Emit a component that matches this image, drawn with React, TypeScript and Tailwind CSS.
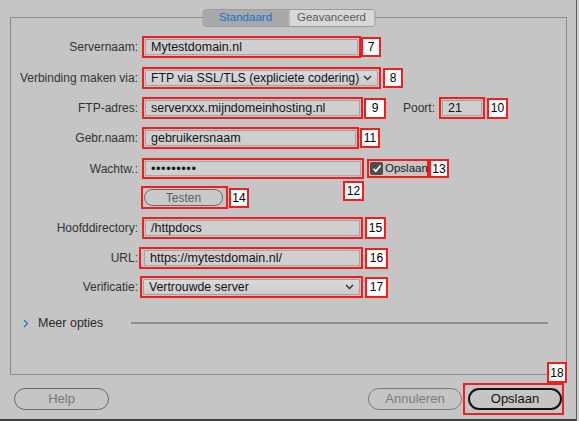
import React from 'react'

function Badge({ n, className = '' }: { n: string; className?: string }) {
  return (
    <div
      className={`flex items-center justify-center border-2 border-[#f21d1d] bg-white text-[12px] leading-none text-black ${className}`}
    >
      {n}
    </div>
  )
}

function Label({ text, className = '' }: { text: string; className?: string }) {
  return <div className={`w-[127px] shrink-0 text-right text-[12px] text-[#333] ${className}`}>{text}</div>
}

function Field({ value, width, className = '' }: { value: string; width: string; className?: string }) {
  return (
    <div className={`h-[22px] shrink-0 border-2 border-[#f21d1d] p-[1px] ${width} ${className}`}>
      <div className="flex h-full items-center whitespace-nowrap border border-[#a7a7a7] border-t-[#9d9d9d] bg-[#cfcfcf] pl-[5px] text-[12.5px] text-[#141414]">
        {value}
      </div>
    </div>
  )
}

function Chevron() {
  return (
    <svg width="9" height="6" viewBox="0 0 9 6" className="shrink-0">
      <path d="M1 1 L4.5 4.5 L8 1" fill="none" stroke="#2b2b2b" strokeWidth="1.3" />
    </svg>
  )
}

function Select({ value, width }: { value: string; width: string }) {
  return (
    <div className={`h-[22px] shrink-0 border-2 border-[#f21d1d] p-[1px] ${width}`}>
      <div className="flex h-full items-center justify-between whitespace-nowrap rounded-[2px] border border-[#a3a3a3] bg-gradient-to-b from-[#d9d9d9] to-[#cdcdcd] pl-[5px] pr-[5px] text-[12.3px] text-[#141414]">
        <span>{value}</span>
        <Chevron />
      </div>
    </div>
  )
}

export default function App() {
  return (
    <div className="flex h-[421px] w-[579px] overflow-hidden bg-[#c5c5c5] font-['Liberation_Sans',Arial,sans-serif]">
      <div className="flex h-full w-[576px] shrink-0 flex-col border-b-[2px] border-[#404040] pl-[10px] pt-[17px]">
        {/* groepsvak */}
        <div className="relative h-[358px] w-[557px] shrink-0 border border-[#8c8c8c]">
          {/* tabs */}
          <div className="absolute left-1/2 top-[-9px] flex h-[18px] -translate-x-1/2 overflow-hidden rounded-[4px] border border-[#9a9a9a] text-[11.5px]">
            <div className="flex w-[85px] items-center justify-center bg-[#a9a9a9] text-[#1b6fd2]">Standaard</div>
            <div className="flex w-[86px] items-center justify-center border-l border-[#9a9a9a] bg-[#d8d8d8] text-[#595959]">
              Geavanceerd
            </div>
          </div>

          <div className="flex flex-col pt-[18px]">
            {/* Servernaam */}
            <div className="flex h-[22px] items-center">
              <Label text="Servernaam:" className="mr-[4px]" />
              <Field value="Mytestdomain.nl" width="w-[219px]" />
              <Badge n="7" className="h-[20px] w-[20px]" />
            </div>

            {/* Verbinding */}
            <div className="mt-[9px] flex h-[22px] items-center">
              <Label text="Verbinding maken via:" className="mr-[4px]" />
              <Select value="FTP via SSL/TLS (expliciete codering)" width="w-[239px]" />
              <Badge n="8" className="ml-[2px] h-[20px] w-[20px]" />
            </div>

            {/* FTP-adres */}
            <div className="mt-[8px] flex h-[22px] items-center">
              <Label text="FTP-adres:" className="mr-[4px]" />
              <Field value="serverxxx.mijndomeinhosting.nl" width="w-[221px]" />
              <Badge n="9" className="ml-[1px] h-[21px] w-[22px]" />
              <div className="ml-[17px] text-[12px] text-[#333]">Poort:</div>
              <Field value="21" width="w-[46px]" className="ml-[4px]" />
              <Badge n="10" className="ml-[2px] h-[21px] w-[21px]" />
            </div>

            {/* Gebr.naam */}
            <div className="mt-[8px] flex h-[22px] items-center">
              <Label text="Gebr.naam:" className="mr-[4px]" />
              <Field value="gebruikersnaam" width="w-[217px]" />
              <Badge n="11" className="ml-[1px] h-[20px] w-[20px]" />
            </div>

            {/* Wachtw. */}
            <div className="mt-[9px] flex h-[21px] items-center">
              <Label text="Wachtw.:" className="mr-[4px]" />
              <div className="relative">
                <div className="h-[21px] w-[222px] border-2 border-[#f21d1d] p-[1px]">
                  <div className="flex h-full items-center border border-[#a7a7a7] bg-[#cfcfcf] pl-[5px] text-[13px] tracking-[0.5px] text-[#141414]">
                    •••••••••
                  </div>
                </div>
                <Badge n="12" className="absolute right-0 top-[23px] h-[20px] w-[21px]" />
              </div>
              <div className="ml-[3px] flex h-[19px] w-[62px] items-center border-2 border-[#f21d1d] pl-[1px]">
                <div className="flex h-[13px] w-[13px] shrink-0 items-center justify-center rounded-[2px] bg-[#4d4d4d]">
                  <svg width="10" height="9" viewBox="0 0 10 9">
                    <path d="M1.5 4.8 L3.8 7.2 L8.5 1.5" fill="none" stroke="#ffffff" strokeWidth="1.6" />
                  </svg>
                </div>
                <span className="ml-[2px] whitespace-nowrap text-[11.5px] text-[#1a1a1a]">Opslaan</span>
              </div>
              <Badge n="13" className="h-[19px] w-[20px]" />
            </div>

            {/* Testen */}
            <div className="mt-[7px] flex h-[23px] items-center">
              <div className="mr-[3px] w-[127px] shrink-0" />
              <div className="flex h-[23px] w-[87px] items-center border-2 border-[#f21d1d] pl-[1px]">
                <div className="flex h-[17px] w-[79px] items-center justify-center rounded-full border border-[#676767] bg-[#c9c9c9] text-[12px] text-[#5e5e5e]">
                  Testen
                </div>
              </div>
              <Badge n="14" className="ml-[1px] h-[20px] w-[20px]" />
            </div>

            {/* Hoofddirectory */}
            <div className="mt-[8px] flex h-[22px] items-center">
              <Label text="Hoofddirectory:" className="mr-[4px]" />
              <Field value="/httpdocs" width="w-[221px]" />
              <Badge n="15" className="ml-[2px] h-[22px] w-[21px]" />
            </div>

            {/* URL */}
            <div className="mt-[8px] flex h-[22px] items-center">
              <Label text="URL:" className="mr-[1px]" />
              <div className="h-[22px] w-[224px] shrink-0 border-2 border-[#f21d1d] py-[1px] pl-[3px] pr-[1px]">
                <div className="flex h-full items-center border border-[#a7a7a7] bg-[#cfcfcf] pl-[5px] text-[12.5px] text-[#141414]">
                  https://mytestdomain.nl/
                </div>
              </div>
              <Badge n="16" className="ml-[2px] h-[21px] w-[23px]" />
            </div>

            {/* Verificatie */}
            <div className="mt-[7px] flex h-[22px] items-center">
              <Label text="Verificatie:" className="mr-[2px]" />
              <Select value="Vertrouwde server" width="w-[223px]" />
              <Badge n="17" className="ml-[2px] h-[21px] w-[23px]" />
            </div>

            {/* Meer opties */}
            <div className="mt-[17px] flex h-[16px] items-center pl-[12px]">
              <svg width="6" height="9" viewBox="0 0 6 9" className="shrink-0">
                <path d="M1 1 L4.5 4.5 L1 8" fill="none" stroke="#2a6fd0" strokeWidth="1.3" />
              </svg>
              <span className="ml-[9px] text-[12.5px] text-[#2a2a2a]">Meer opties</span>
              <div className="ml-[28px] mr-[18px] h-[2px] flex-1 bg-[#8f8f8f]" />
            </div>
          </div>
        </div>

        {/* knoppen */}
        <div className="mt-[8px] flex h-[32px] w-[566px] items-center pr-[12px]">
          <div className="ml-[4px] flex h-[22px] w-[95px] items-center justify-center rounded-full border border-[#6a6a6a] text-[13px] text-[#777]">
            Help
          </div>
          <div className="flex-1" />
          <div className="flex h-[22px] w-[94px] items-center justify-center rounded-full border border-[#7a7a7a] text-[13px] text-[#7a7a7a]">
            Annuleren
          </div>
          <div className="relative ml-[1px] flex h-[32px] w-[101px] items-center border-2 border-[#f21d1d] pl-[3px]">
            <div className="flex h-[22px] w-[94px] items-center justify-center rounded-full border-2 border-[#151515] text-[13px] text-[#111]">
              Opslaan
            </div>
            <Badge n="18" className="absolute left-[82px] top-[-23px] h-[21px] w-[20px]" />
          </div>
        </div>
      </div>
      <div className="h-full w-[1px] shrink-0 bg-[#5a5a5a]" />
      <div className="h-full flex-1 bg-[#d2d2d2]" />
    </div>
  )
}
